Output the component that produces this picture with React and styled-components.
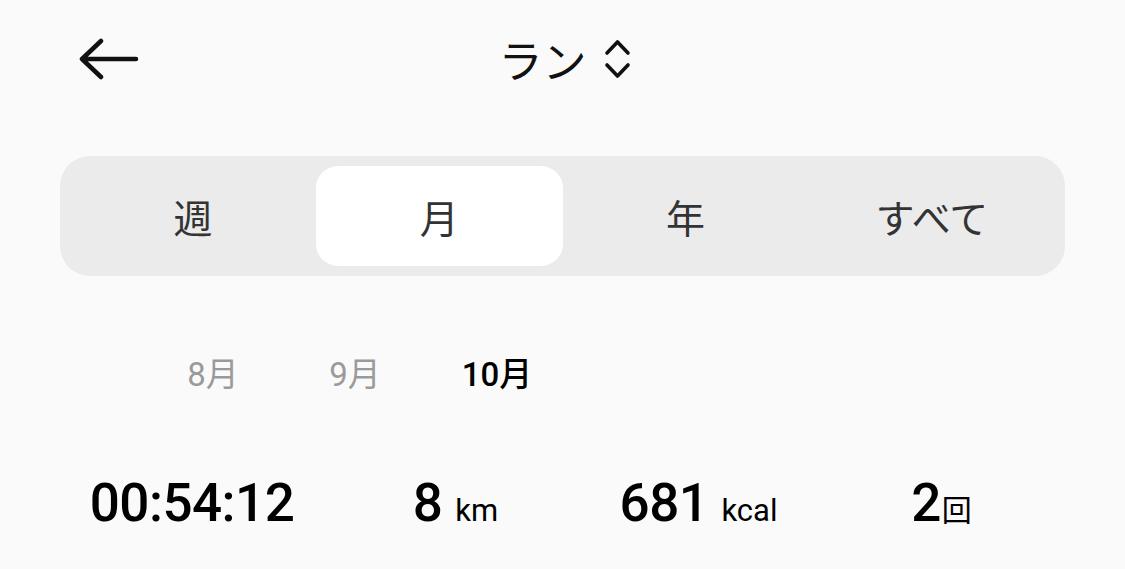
import React, { useState } from 'react'
import styled, { createGlobalStyle } from 'styled-components'

const GlobalStyle = createGlobalStyle`
    html, body {
        margin: 0;
        padding: 0;
        background: #fafafa;
    }
    body {
        font-family: 'Noto Sans CJK JP', sans-serif;
        color: #111;
    }
`

const Page = styled.div`
    width: 1125px;
    height: 569px;
    box-sizing: border-box;
    padding: 0 60px;
    overflow: hidden;
`

const Header = styled.div`
    display: grid;
    grid-template-columns: 1fr auto 1fr;
    align-items: center;
    height: 118px;
`

const BackButton = styled.button`
    justify-self: start;
    display: flex;
    align-items: center;
    padding: 0 0 0 18px;
    border: none;
    background: none;
    cursor: pointer;
`

const Title = styled.div`
    display: flex;
    align-items: center;
    gap: 17px;
    font-size: 44px;
    line-height: 1;
    color: #111;
    transform: translateX(2px);
`

const Segment = styled.div`
    display: grid;
    grid-template-columns: repeat(4, 1fr);
    margin-top: 38px;
    height: 120px;
    box-sizing: border-box;
    padding: 10px;
    border-radius: 30px;
    background: #ebebeb;
`

const Tab = styled.div`
    display: flex;
    align-items: center;
    justify-content: center;
    border-radius: 22px;
    font-size: 39px;
    color: #333;
    background: ${p => (p.active ? '#ffffff' : 'transparent')};
    cursor: pointer;
`

const Months = styled.div`
    display: flex;
    margin-top: 79px;
    padding-left: 82px;
    height: 40px;
`

const Month = styled.div`
    width: 142px;
    text-align: center;
    font-family: Roboto, 'Noto Sans CJK JP', sans-serif;
    font-size: 33px;
    line-height: 40px;
    font-weight: ${p => (p.active ? 500 : 400)};
    color: ${p => (p.active ? '#000' : '#9a9a9a')};
`

const Stats = styled.div`
    display: grid;
    grid-template-columns: 284px repeat(3, 243px);
    margin-top: 78px;
    margin-left: -10px;
`

const Stat = styled.div`
    display: flex;
    align-items: baseline;
    justify-content: center;
    font-family: Roboto, 'Noto Sans CJK JP', sans-serif;
    line-height: 60px;
    color: #000;
`

const Value = styled.span`
    font-size: 53px;
    font-weight: 500;
    letter-spacing: -0.5px;
`

const Unit = styled.span`
    margin-left: ${p => (p.tight ? '1px' : '13px')};
    font-size: ${p => (p.tight ? '30px' : '31px')};
    font-weight: 400;
`

function BackArrow() {
    return (
        <svg width="62" height="42" viewBox="0 0 62 42" fill="none">
            <path
                d="M23 3 L4 21 L23 39 M4 21 L58 21"
                stroke="#111"
                strokeWidth="4.5"
                strokeLinecap="round"
                strokeLinejoin="round"
            />
        </svg>
    )
}

function UpDown() {
    return (
        <svg width="27" height="42" viewBox="0 0 27 42" fill="none">
            <path
                d="M3 15 L13.5 4 L24 15 M3 27 L13.5 38 L24 27"
                stroke="#111"
                strokeWidth="3.6"
                strokeLinecap="round"
                strokeLinejoin="round"
            />
        </svg>
    )
}

const tabs = ['週', '月', '年', 'すべて']
const months = ['8月', '9月', '10月']
const stats = [
    { value: '00:54:12', unit: '' },
    { value: '8', unit: 'km' },
    { value: '681', unit: 'kcal' },
    { value: '2', unit: '回', tight: true },
]

export default function App() {
    const [tab, setTab] = useState(1)
    const [month, setMonth] = useState(2)

    return (
        <Page>
            <GlobalStyle />
            <Header>
                <BackButton aria-label="戻る">
                    <BackArrow />
                </BackButton>
                <Title>
                    ラン
                    <UpDown />
                </Title>
                <div />
            </Header>

            <Segment>
                {tabs.map((t, i) => (
                    <Tab key={t} active={i === tab} onClick={() => setTab(i)}>
                        {t}
                    </Tab>
                ))}
            </Segment>

            <Months>
                {months.map((m, i) => (
                    <Month key={m} active={i === month} onClick={() => setMonth(i)}>
                        {m}
                    </Month>
                ))}
            </Months>

            <Stats>
                {stats.map(s => (
                    <Stat key={s.value}>
                        <Value>{s.value}</Value>
                        {s.unit && <Unit tight={s.tight}>{s.unit}</Unit>}
                    </Stat>
                ))}
            </Stats>
        </Page>
    )
}
